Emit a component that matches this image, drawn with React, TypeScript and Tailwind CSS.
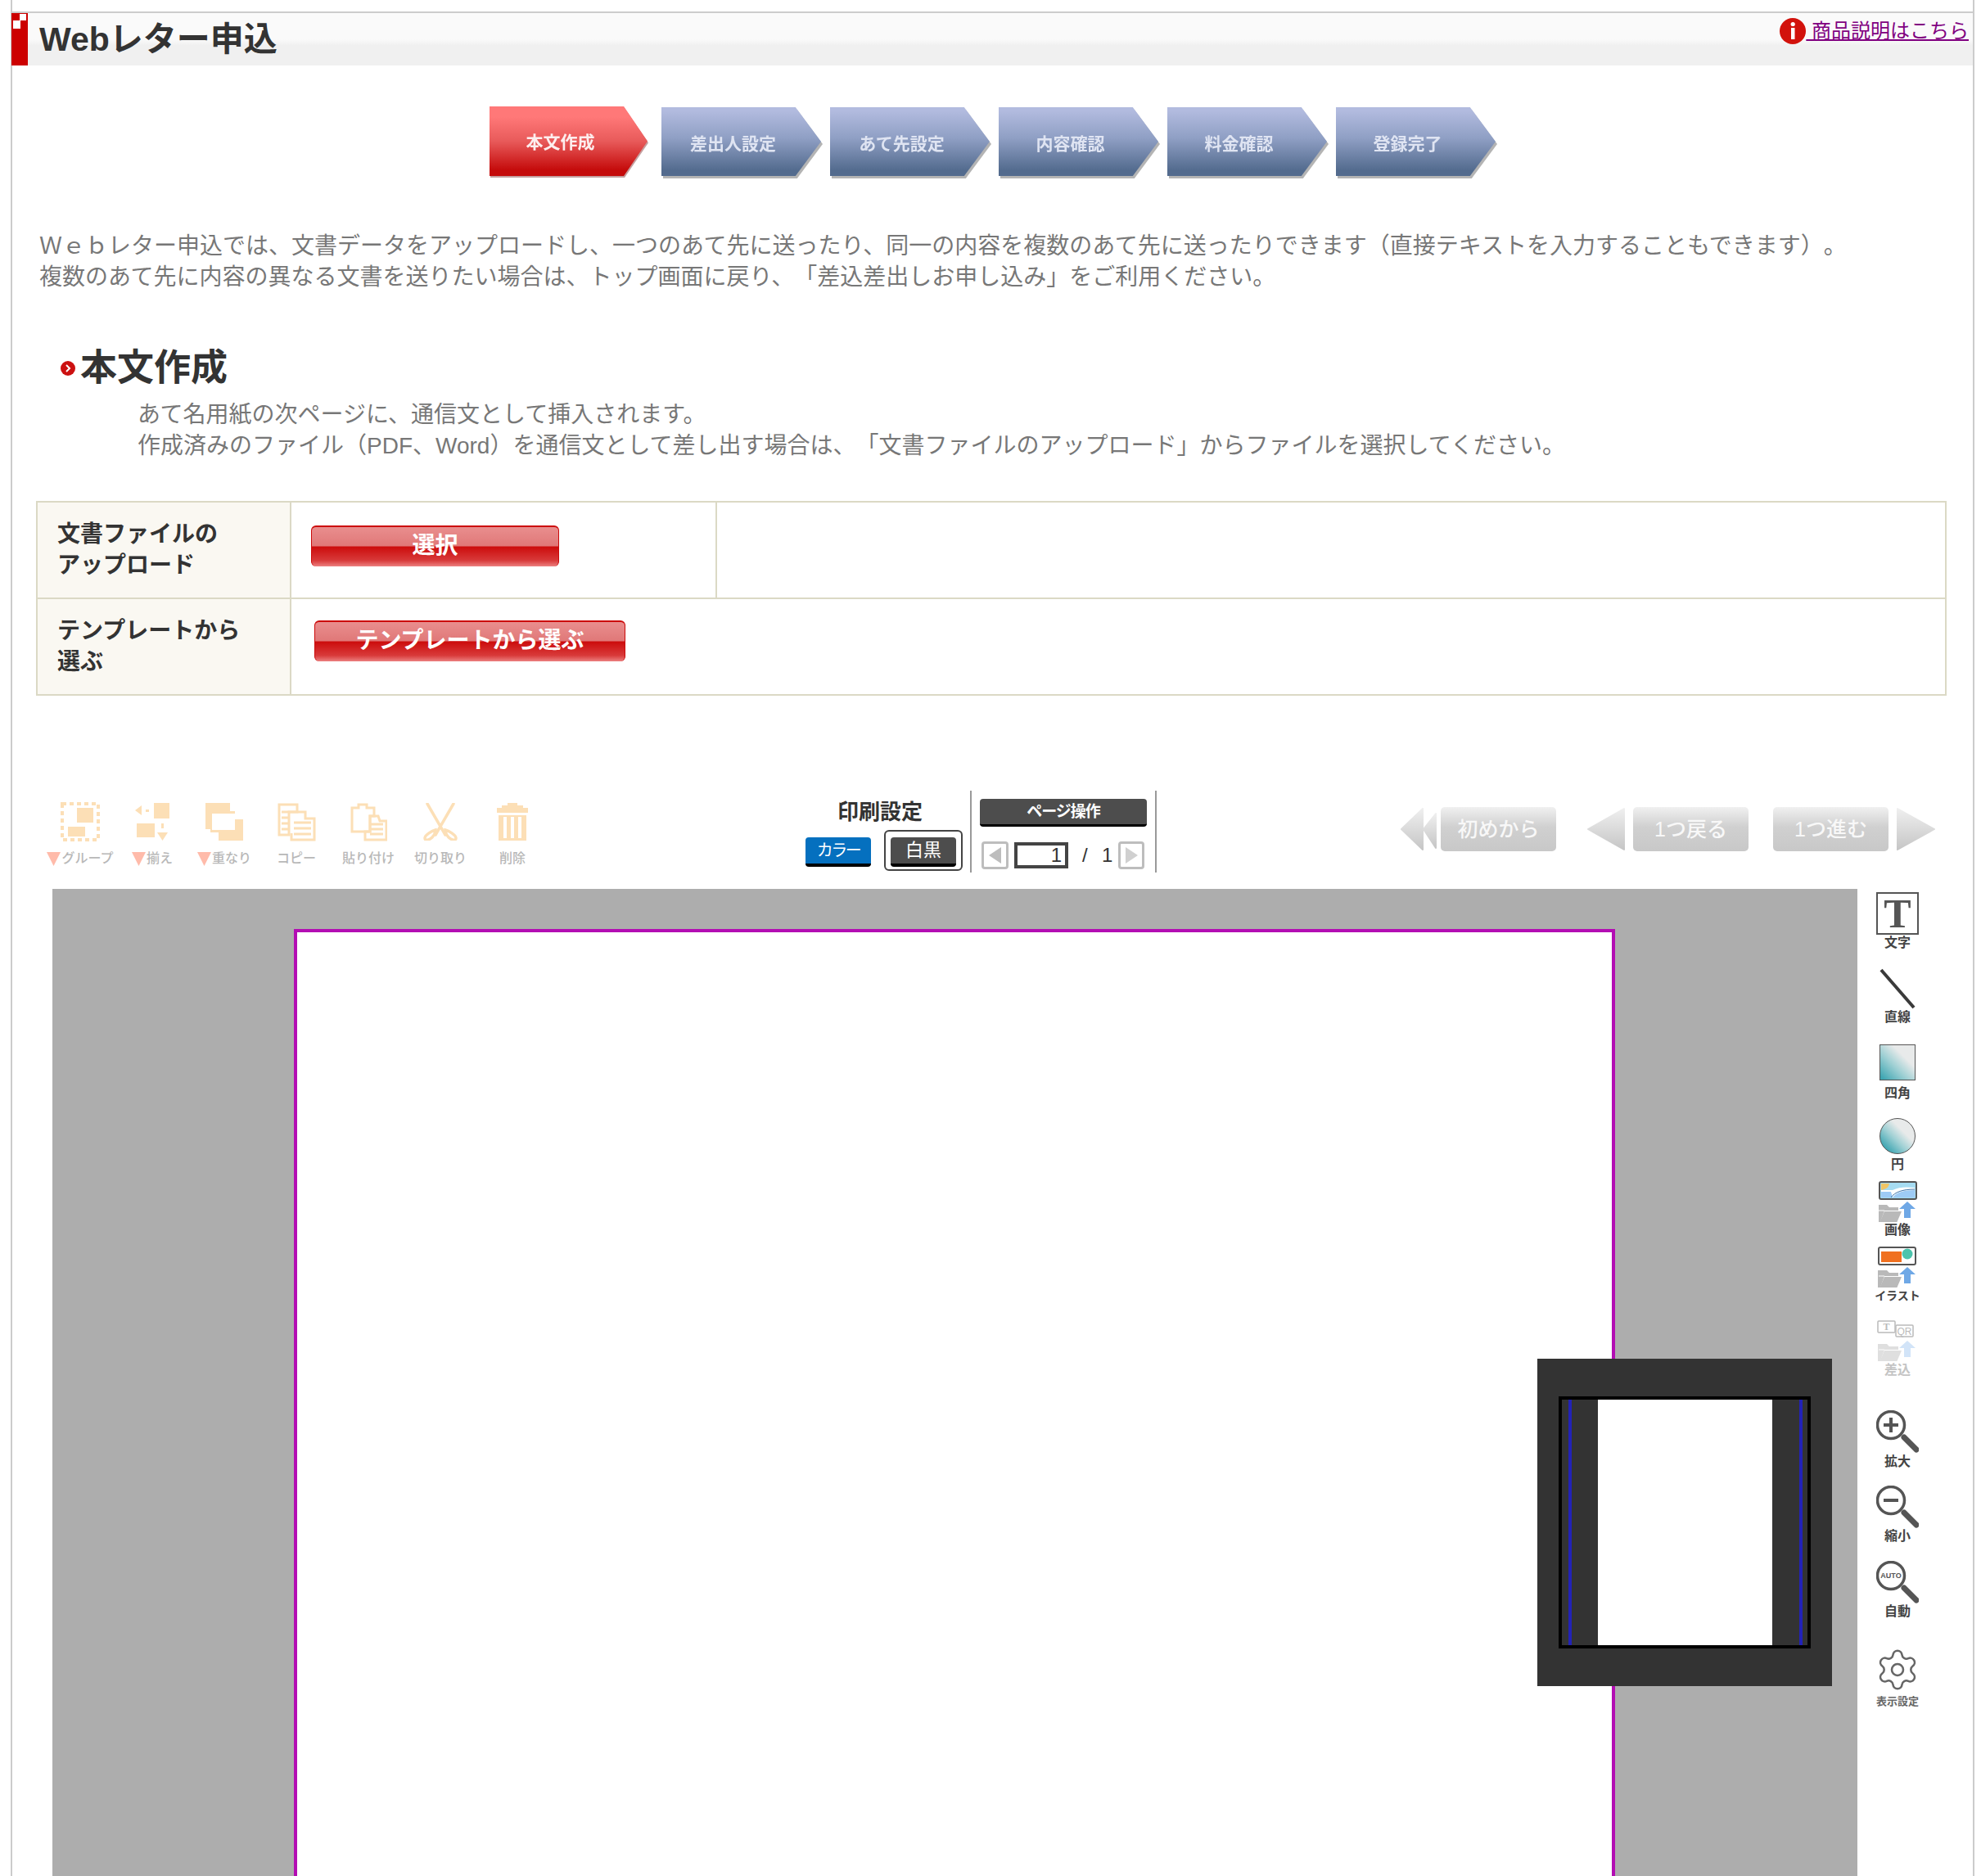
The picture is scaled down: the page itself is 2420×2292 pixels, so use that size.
import { Settings } from 'lucide-react';

const STEPS = ['差出人設定', 'あて先設定', '内容確認', '料金確認', '登録完了'];

const TOOL_LABEL = 'text-[16px] leading-4 font-bold text-[#444] whitespace-nowrap';
const ICON_COLOR = '#fcdfb6';

function FolderUp({ faded = false }: { faded?: boolean }) {
  return (
    <g opacity={faded ? 0.45 : 1}>
      <path d="M0 4h11l3 3h11v4H8L3 25H0z" fill="#b9b9b9" />
      <path d="M8 12h21l-6 14H2z" fill="#b9b9b9" />
      <path d="M1 11h7" stroke="#fff" strokeWidth="1" />
      <path d="M36 0l10 9h-6v11h-8V9h-6z" fill={faded ? '#9cc4f0' : '#6fa8e6'} />
    </g>
  );
}

function Magnifier({ children }: { children?: React.ReactNode }) {
  return (
    <svg width="52" height="52" viewBox="0 0 52 52" fill="none">
      <circle cx="18" cy="18" r="16.5" stroke="#555" strokeWidth="3.5" />
      <path d="M34 33l15 15" stroke="#555" strokeWidth="7" strokeLinecap="round" />
      {children}
    </svg>
  );
}

function NavArrow({ id, points, w }: { id: string; points: string[]; w: number }) {
  return (
    <svg width={w} height="54" viewBox={`0 0 ${w} 54`}>
      <defs>
        <linearGradient id={id} x1="0" y1="0" x2="0" y2="1">
          <stop offset="0" stopColor="#efefef" />
          <stop offset="1" stopColor="#c6c6c6" />
        </linearGradient>
      </defs>
      {points.map(p => (
        <polygon key={p} points={p} fill={`url(#${id})`} stroke={`url(#${id})`} strokeWidth="2" strokeLinejoin="round" />
      ))}
    </svg>
  );
}

function NavButton({ label }: { label: string }) {
  return (
    <div className="w-[141px] h-[54px] rounded-[5px] bg-[linear-gradient(#f0f0f0,#d0d0d0_45%,#c8c8c8)] flex items-center justify-center pt-[2px] text-[25px] font-medium text-[#f8f8f8]">
      {label}
    </div>
  );
}

function RedButton({ label, className }: { label: string; className: string }) {
  return (
    <button className={`h-[50px] rounded-[6px] border-t-2 border-x border-[#cc0a0a] bg-[linear-gradient(#e98e8e,#e07878_48%,#cc0c0c_50%,#d83a3a_85%,#ec8080)] text-white text-[28px] font-bold leading-none pb-[2px] ${className}`}>
      {label}
    </button>
  );
}

function ToolItem({ label, menu = false, children }: { label: string; menu?: boolean; children: React.ReactNode }) {
  return (
    <div className="w-[88px] flex flex-col items-center">
      <div className="h-[48px] flex items-center justify-center">{children}</div>
      <div className="mt-[11px] h-5 flex items-center text-[16px] font-medium text-[#b8b8b8] whitespace-nowrap">
        {menu && (
          <svg width="17" height="18" viewBox="0 0 17 18" className="mr-px">
            <path d="M0 1h17L8.500 18z" fill="#ffbbaa" />
          </svg>
        )}
        {label}
      </div>
    </div>
  );
}

function SideTool({ label, gap, top, labelClass = TOOL_LABEL, children }: { label: string; gap: string; top: string; labelClass?: string; children: React.ReactNode }) {
  return (
    <div className={`flex flex-col items-center ${top}`}>
      {children}
      <div className={`${gap} ${labelClass}`}>{label}</div>
    </div>
  );
}

export default function App() {
  return (
    <div lang="ja" className="w-[2420px] h-[2292px] overflow-hidden bg-white font-['Liberation_Sans','Noto_Sans_CJK_JP',sans-serif] [text-spacing-trim:space-all]">
      <div className="ml-[13px] w-[2399px] h-full border-x-2 border-[#cccccc] pt-[14px]">
        {/* Header */}
        <div className="h-[66px] border-t-2 border-[#cccccc] bg-[linear-gradient(#fafafa_50%,#f0f0f0_62%)] flex items-start">
          <div className="-ml-px w-[20px] h-full bg-[#cc0000] flex-shrink-0">
            <svg width="20" height="22" viewBox="0 0 20 22">
              <rect x="10" y="1" width="8" height="8" fill="#fff" />
              <rect x="2" y="9" width="9" height="10" fill="#fff" />
            </svg>
          </div>
          <h1 className="ml-[14px] text-[41px] leading-[64px] font-bold text-[#333]">Webレター申込</h1>
          <a className="ml-auto mr-[5px] mt-[6px] flex items-center text-[24px] leading-[32px] text-[#800080] underline">
            <svg width="32" height="32" viewBox="0 0 32 32">
              <circle cx="16" cy="16" r="16" fill="#d2120c" />
              <rect x="14" y="12" width="4.5" height="14" fill="#fff" />
              <circle cx="16.2" cy="7.5" r="2.6" fill="#fff" />
            </svg>
            <span className="whitespace-pre"> 商品説明はこちら</span>
          </a>
        </div>

        {/* Steps */}
        <div className="mt-[50px] ml-[583px] flex items-start h-[90px]">
          <div className="drop-shadow-[1px_2px_0_#c4a0a0] mr-[17px]">
            <div className="w-[193px] h-[85px] bg-[linear-gradient(#ff7878_15%,#e85a5a_50%,#c40a0a_92%)] [clip-path:polygon(0_0,85%_0,100%_50%,85%_100%,0_100%)] flex items-center justify-center pr-[20px] pt-[2px] text-[21px] font-bold text-[#fdeeee]">
              本文作成
            </div>
          </div>
          <div className="flex gap-[11px] mt-px">
            {STEPS.map(s => (
              <div key={s} className="drop-shadow-[2px_3px_0_#b4b4b4]">
                <div className="w-[195px] h-[84px] bg-[linear-gradient(#b2bbdf_5%,#8f9fc4_45%,#536b8e_92%)] [clip-path:polygon(0_0,84%_0,100%_50%,84%_100%,0_100%)] flex items-center justify-center pr-[20px] pt-[5px] text-[21px] font-bold text-[#dfe4f2]">
                  {s}
                </div>
              </div>
            ))}
          </div>
        </div>

        {/* Intro */}
        <div className="mt-[62px] pl-[33px] text-[28px] leading-[38px] text-[#777] whitespace-nowrap">
          <p>Ｗｅｂレター申込では、文書データをアップロードし、一つのあて先に送ったり、同一の内容を複数のあて先に送ったりできます（直接テキストを入力することもできます）。</p>
          <p>複数のあて先に内容の異なる文書を送りたい場合は、トップ画面に戻り、「差込差出しお申し込み」をご利用ください。</p>
        </div>

        <div className="mt-[62px] pl-[59px] flex items-center gap-[6px] h-[60px]">
          <svg width="18" height="18" viewBox="0 0 18 18">
            <circle cx="9" cy="9" r="9" fill="#cc1111" />
            <path d="M7 5l4 4-4 4" stroke="#fff" strokeWidth="2" fill="none" />
          </svg>
          <h2 className="text-[45px] leading-[60px] font-bold text-[#333]">本文作成</h2>
        </div>
        <div className="mt-2 pl-[153px] text-[28px] leading-[38px] text-[#777] whitespace-nowrap">
          <p>あて名用紙の次ページに、通信文として挿入されます。</p>
          <p>作成済みのファイル（PDF、Word）を通信文として差し出す場合は、「文書ファイルのアップロード」からファイルを選択してください。</p>
        </div>

        {/* Upload table */}
        <table className="mt-[48px] ml-[29px] w-[2334px] table-fixed border-collapse border-2 border-[#dbd9c5]">
          <colgroup>
            <col className="w-[310px]" />
            <col className="w-[520px]" />
            <col />
          </colgroup>
          <tbody>
            <tr className="h-[118px]">
              <th className="bg-[#faf8f2] border-2 border-[#dbd9c5] pl-[24px] text-left text-[28px] leading-[38px] font-bold text-[#333]">文書ファイルの<br />アップロード</th>
              <td className="border-2 border-[#dbd9c5] pl-[24px] pb-[10px]">
                <RedButton label="選択" className="w-[303px]" />
              </td>
              <td className="border-2 border-[#dbd9c5]" />
            </tr>
            <tr className="h-[118px]">
              <th className="bg-[#faf8f2] border-2 border-[#dbd9c5] pl-[24px] text-left text-[28px] leading-[38px] font-bold text-[#333]">テンプレートから<br />選ぶ</th>
              <td colSpan={2} className="border-2 border-[#dbd9c5] pl-[28px] pb-[14px]">
                <RedButton label="テンプレートから選ぶ" className="w-[380px]" />
              </td>
            </tr>
          </tbody>
        </table>

        {/* Toolbar */}
        <div className="mt-[116px] h-[120px] flex items-start">
          <div className="ml-[39px] w-[616px] flex pt-[14px]">
            <ToolItem label="グループ" menu>
              <svg width="48" height="48" viewBox="0 0 48 48" fill={ICON_COLOR}>
                <rect x="2" y="2" width="44" height="44" fill="none" stroke={ICON_COLOR} strokeWidth="4" strokeDasharray="5 4" />
                <rect x="20" y="7" width="20" height="18" />
                <rect x="9" y="30" width="21" height="12" />
              </svg>
            </ToolItem>
            <ToolItem label="揃え" menu>
              <svg width="42" height="46" viewBox="0 0 42 46" fill={ICON_COLOR}>
                <rect x="23" y="0" width="19" height="19" />
                <rect x="2" y="25" width="22" height="17" />
                <path d="M0 9l8-6v12z" />
                <rect x="13" y="8" width="4" height="3" />
                <path d="M27 36h13l-6.500 10z" />
                <rect x="32" y="25" width="3" height="6" />
              </svg>
            </ToolItem>
            <ToolItem label="重なり" menu>
              <svg width="46" height="46" viewBox="0 0 46 46" fill={ICON_COLOR}>
                <path d="M0 0h30v10h6v10h10v26H16V36H6v-4H0z" />
                <rect x="8" y="13" width="28" height="20" fill="#fff" />
              </svg>
            </ToolItem>
            <ToolItem label="コピー">
              <svg width="47" height="47" viewBox="0 0 47 47" fill="none" stroke={ICON_COLOR} strokeWidth="3">
                <path d="M2 2h22v9H14v28H2z" />
                <path d="M5 11h9M5 18h9M5 25h9M5 32h9" />
                <path d="M14 11h20v8h11v26H17V37" />
                <path d="M20 24h21M20 31h21M20 38h21" />
              </svg>
            </ToolItem>
            <ToolItem label="貼り付け">
              <svg width="45" height="47" viewBox="0 0 45 47" fill="none" stroke={ICON_COLOR} strokeWidth="3">
                <path d="M2 6h8V2h10v4h9v10h-5v19H2z" />
                <path d="M24 16h10l2 6h8v23H18V35h6z" />
                <path d="M24 26h16M24 32h16M24 38h16" />
              </svg>
            </ToolItem>
            <ToolItem label="切り取り">
              <svg width="42" height="46" viewBox="0 0 42 46" fill="none" stroke={ICON_COLOR} strokeWidth="3.500" strokeLinecap="round">
                <path d="M5 1l22 38" />
                <path d="M37 1L15 39" />
                <path d="M15 33c-4 1-13 6-13 10s6 2 9-1 4-6 4-9z" />
                <path d="M27 33c4 1 13 6 13 10s-6 2-9-1-4-6-4-9z" />
              </svg>
            </ToolItem>
            <ToolItem label="削除">
              <svg width="38" height="46" viewBox="0 0 38 46" fill={ICON_COLOR}>
                <path d="M13 0h12v3h7v3h6v6H0V6h6V3h7z" />
                <path d="M2 15h34v31H2zM8 17v26h4V17zM17 17v26h4V17zM26 17v26h4V17z" fillRule="evenodd" />
              </svg>
            </ToolItem>
          </div>

          {/* Print settings */}
          <div className="ml-[306px] w-[211px] h-[100px] border-r-2 border-[#999] pt-[13px] pl-[8px]">
            <div className="w-[182px] text-center text-[26px] leading-[26px] font-bold text-[#333]">印刷設定</div>
            <div className="mt-[9px] flex items-start gap-[16px]">
              <div className="mt-[9px] w-[80px] h-[36px] rounded-[4px] bg-[#0570bf] border-b-4 border-black flex items-center justify-center text-[20px] leading-none tracking-[-2.5px] text-white">カラー</div>
              <div className="w-[96px] h-[50px] rounded-[6px] border-2 border-[#444] px-[6px] pt-[7px]">
                <div className="w-[80px] h-[36px] rounded-[4px] bg-[#4d4d4d] border-b-4 border-black flex items-center justify-center text-[22px] leading-none text-white">白黒</div>
              </div>
            </div>
          </div>

          {/* Page controls */}
          <div className="w-[226px] h-[100px] border-r-2 border-[#999] pt-[10px] pl-[10px]">
            <div className="w-[204px] h-[34px] rounded-[4px] bg-[#4d4d4d] border-b-[3px] border-black flex items-center justify-center text-[19px] leading-none tracking-[-1px] font-bold text-white">ページ操作</div>
            <div className="mt-[18px] flex items-center pl-[2px] text-[24px] leading-none text-[#333]">
              <div className="w-[33px] h-[34px] rounded-[4px] border-[3px] border-[#bdbdbd] flex items-center justify-center">
                <svg width="15" height="20" viewBox="0 0 15 20"><path d="M15 0v20L0 10z" fill="#bdbdbd" /></svg>
              </div>
              <div className="ml-[7px] w-[66px] h-[32px] border-4 border-[#444] flex items-center justify-end pr-[4px]">1</div>
              <span className="ml-[17px] w-[24px]">/</span>
              <span className="w-[20px]">1</span>
              <div className="w-[32px] h-[34px] rounded-[4px] border-[3px] border-[#bdbdbd] flex items-center justify-center">
                <svg width="15" height="20" viewBox="0 0 15 20"><path d="M0 0v20l15-10z" fill="#d0d0d0" /></svg>
              </div>
            </div>
          </div>

          {/* History */}
          <div className="ml-[298px] mt-[20px] flex items-center">
            <NavArrow id="nav-first" w={44} points={['1,27 27,2 27,52', '28,27 43,8 43,50']} />
            <div className="ml-[5px]"><NavButton label="初めから" /></div>
            <div className="ml-[38px]"><NavArrow id="nav-prev" w={46} points={['1,27 45,2 45,52']} /></div>
            <div className="ml-[10px]"><NavButton label="1つ戻る" /></div>
            <div className="ml-[30px]"><NavButton label="1つ進む" /></div>
            <div className="ml-[10px]"><NavArrow id="nav-next" w={47} points={['1,2 46,27 1,52']} /></div>
          </div>
        </div>

        {/* Canvas + side tools */}
        <div className="flex items-start">
          <div className="relative ml-[49px] w-[2205px] h-[1206px] bg-[#adadad] overflow-hidden pt-[49px] pl-[295px]">
            <div className="w-[1614px] h-[1300px] bg-white border-4 border-[#b30db3]" />
            <div className="absolute left-[1814px] top-[574px] w-[360px] h-[400px] bg-[#333] pt-[46px] pl-[26px]">
              <div className="w-[308px] h-[308px] border-4 border-black flex">
                <div className="w-[8px]" />
                <div className="w-[4px] bg-[#2222b8]" />
                <div className="w-[32px]" />
                <div className="w-[213px] bg-white" />
                <div className="w-[33px]" />
                <div className="w-[4px] bg-[#2222b8]" />
              </div>
            </div>
          </div>

          <div className="w-[98px] pt-[4px] flex flex-col items-center">
            <SideTool label="文字" gap="mt-[2px]" top="">
              <div className="w-[52px] h-[52px] border-2 border-[#555] flex items-center justify-center font-['Liberation_Serif',serif] font-bold text-[50px] leading-none text-[#555]">T</div>
            </SideTool>
            <SideTool label="直線" gap="mt-[2px]" top="mt-[23px]">
              <svg width="44" height="50" viewBox="0 0 44 50"><path d="M2 2l40 46" stroke="#3a3a3a" strokeWidth="4" /></svg>
            </SideTool>
            <SideTool label="四角" gap="mt-[8px]" top="mt-[25px]">
              <div className="w-[44px] h-[44px] border border-[#555] bg-[linear-gradient(45deg,#3fa6b2_5%,#9fd0d4_40%,#e8eaea_68%)]" />
            </SideTool>
            <SideTool label="円" gap="mt-[5px]" top="mt-[22px]">
              <div className="w-[44px] h-[44px] rounded-full border border-[#555] bg-[linear-gradient(45deg,#3fa6b2_15%,#9fd0d4_42%,#e8eaea_65%)]" />
            </SideTool>
            <SideTool label="画像" gap="mt-[2px]" top="mt-[12px]">
              <svg width="47" height="50" viewBox="0 0 47 50">
                <rect x="1" y="1" width="45" height="21" rx="2" fill="#a6dcf2" stroke="#555" strokeWidth="2" />
                <path d="M3 3h10c-1 5-4 7-10 8z" fill="#f0c566" />
                <path d="M3 11h14c8-4 16-4 27-3v12H3z" fill="#fff" />
                <path d="M3 13h12l2 7H3zM17 20c4-6 14-9 27-9v9z" fill="#9ecbf5" />
                <path d="M15 20c5-7 15-10 29-10" stroke="#3f74a8" strokeWidth="1" fill="none" />
                <g transform="translate(-1 25)"><FolderUp /></g>
              </svg>
            </SideTool>
            <SideTool label="イラスト" gap="mt-[2px]" top="mt-[12px]" labelClass="text-[14px] leading-4 font-bold text-[#444] whitespace-nowrap">
              <svg width="47" height="50" viewBox="0 0 47 50">
                <rect x="1" y="1" width="45" height="21" rx="2" fill="#fff" stroke="#555" strokeWidth="2" />
                <rect x="4" y="6" width="25" height="13" fill="#f07020" />
                <circle cx="36" cy="9" r="6.500" fill="#4cc4ac" />
                <g transform="translate(0 25)"><FolderUp /></g>
              </svg>
            </SideTool>
            <SideTool label="差込" gap="mt-[3px]" top="mt-[22px]" labelClass="text-[16px] leading-4 font-bold text-[#c4c4c4] whitespace-nowrap">
              <svg width="50" height="50" viewBox="0 0 50 50">
                <rect x="1" y="1" width="21" height="14" rx="1" fill="#fff" stroke="#bbb" strokeWidth="1.500" />
                <text x="11.500" y="12" textAnchor="middle" fontSize="12" fontWeight="700" fontFamily="Liberation Serif" fill="#bbb">T</text>
                <rect x="23" y="6" width="21" height="14" rx="1" fill="#fff" stroke="#bbb" strokeWidth="1.500" />
                <text x="33.500" y="17.500" textAnchor="middle" fontSize="12" fontFamily="Liberation Sans" fill="#bbb">QR</text>
                <g transform="translate(1 25)"><FolderUp faded /></g>
              </svg>
            </SideTool>
            <SideTool label="拡大" gap="mt-[3px]" top="mt-[41px]">
              <Magnifier><path d="M9 18h18M18 9v18" stroke="#555" strokeWidth="4" /></Magnifier>
            </SideTool>
            <SideTool label="縮小" gap="mt-[2px]" top="mt-[21px]">
              <Magnifier><path d="M9 18h18" stroke="#555" strokeWidth="4" /></Magnifier>
            </SideTool>
            <SideTool label="自動" gap="mt-[2px]" top="mt-[22px]">
              <Magnifier>
                <text x="18" y="21" textAnchor="middle" fontSize="9" fontWeight="700" fontFamily="Liberation Sans" fill="#555">AUTO</text>
              </Magnifier>
            </SideTool>
            <SideTool label="表示設定" gap="mt-[3px]" top="mt-[35px]" labelClass="text-[13px] leading-4 font-bold text-[#666] whitespace-nowrap">
              <Settings size={56} strokeWidth={1.1} color="#666" />
            </SideTool>
          </div>
        </div>
      </div>
    </div>
  );
}
